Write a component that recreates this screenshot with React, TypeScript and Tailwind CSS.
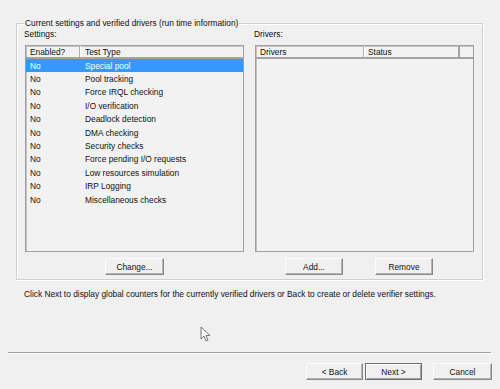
import React from "react";

const Btn = ({ w, children, def }: { w: string; children: React.ReactNode; def?: boolean }) => (
  <div
    className={`${w} h-[17px] flex items-center justify-center bg-[#f0f0f0] ${
      def
        ? "border border-[#6e6e6e] shadow-[inset_1px_1px_0_#fff,inset_-1px_-1px_0_#a0a0a0]"
        : "border border-t-[#fcfcfc] border-l-[#fcfcfc] border-r-[#8a8a8a] border-b-[#8a8a8a] shadow-[inset_-1px_-1px_0_#b4b4b4]"
    }`}
  >
    {children}
  </div>
);

const tests = [
  "Special pool",
  "Pool tracking",
  "Force IRQL checking",
  "I/O verification",
  "Deadlock detection",
  "DMA checking",
  "Security checks",
  "Force pending I/O requests",
  "Low resources simulation",
  "IRP Logging",
  "Miscellaneous checks",
];

export default function App() {
  return (
    <div className="w-[500px] h-[389px] bg-[#f0f0f0] relative overflow-hidden flex flex-col font-['Liberation_Sans',Arial,sans-serif] text-[8.35px] leading-[10px] text-[#111]">
      {/* Group box */}
      <div className="mt-[23px] ml-[16px] w-[467px] h-[257px] border border-[#cfcfcf] relative shadow-[inset_1px_1px_0_#fff,1px_1px_0_#fff] shrink-0">
        <span className="absolute left-[7px] top-[-6px] px-[1px] bg-[#f0f0f0] whitespace-nowrap">
          Current settings and verified drivers (run time information)
        </span>
        <div className="flex pl-[8px] pt-[5px] gap-[11px]">
          {/* Settings column */}
          <div className="flex flex-col w-[219px]">
            <div className="h-[10px] -ml-[1px]">Settings:</div>
            <div className="mt-[6px] h-[207px] border border-[#a0a0a0] bg-[#f2f2f2] shadow-[inset_1px_1px_0_#c4c4c4] flex flex-col">
              <div className="h-[13px] flex border-b-2 border-[#a4a4a4] shrink-0">
                <div className="w-[54px] pl-[4px] pt-[1px] border-r border-[#b0b0b0] shadow-[1px_0_0_#fff]">Enabled?</div>
                <div className="flex-1 pl-[5px] pt-[1px]">Test Type</div>
              </div>
              {tests.map((t, i) => (
                <div
                  key={t}
                  className={`h-[13.4px] flex items-center shrink-0 ${i === 0 ? "bg-[#3399ff] text-white" : ""}`}
                >
                  <div className="w-[54px] pl-[4px]">No</div>
                  <div className="flex-1 pl-[5px] whitespace-nowrap">{t}</div>
                </div>
              ))}
            </div>
            <div className="mt-[6px] flex justify-center">
              <Btn w="w-[59px]">Change...</Btn>
            </div>
          </div>
          {/* Drivers column */}
          <div className="flex flex-col w-[219px]">
            <div className="h-[10px] -ml-[1px]">Drivers:</div>
            <div className="mt-[6px] h-[207px] border border-[#a0a0a0] bg-[#f2f2f2] shadow-[inset_1px_1px_0_#c4c4c4] flex flex-col">
              <div className="h-[13px] flex border-b-2 border-[#a4a4a4] shrink-0">
                <div className="w-[108px] pl-[4px] pt-[1px] border-r border-[#b0b0b0] shadow-[1px_0_0_#fff]">Drivers</div>
                <div className="w-[96px] pl-[4px] pt-[1px] border-r-2 border-[#a4a4a4]">Status</div>
                <div className="flex-1" />
              </div>
            </div>
            <div className="mt-[6px] flex pl-[30px] gap-[32px]">
              <Btn w="w-[58px]">Add...</Btn>
              <Btn w="w-[58px]">Remove</Btn>
            </div>
          </div>
        </div>
      </div>

      <p className="mt-[9px] ml-[24px] whitespace-nowrap">
        Click Next to display global counters for the currently verified drivers or Back to create or delete verifier settings.
      </p>

      <div className="mt-[53px] ml-[8px] w-[483px] h-[2px] border-t border-[#a0a0a0] border-b border-b-white shrink-0" />

      <div className="mt-[9px] flex justify-end pr-[8px] shrink-0">
        <Btn w="w-[57px]">&lt; Back</Btn>
        <div className="w-[2px]" />
        <Btn w="w-[57px]" def>
          Next &gt;
        </Btn>
        <div className="w-[11px]" />
        <Btn w="w-[59px]">Cancel</Btn>
      </div>

      {/* mouse cursor */}
      <svg className="absolute left-[200px] top-[326px]" width="11" height="17" viewBox="0 0 11 17">
        <path
          d="M1 1 L1 13 L4 10 L6 15 L8 14 L6 9.5 L10 9.5 Z"
          fill="#fafafa"
          stroke="#6a6a6a"
          strokeWidth="0.9"
          strokeLinejoin="round"
        />
      </svg>
    </div>
  );
}
